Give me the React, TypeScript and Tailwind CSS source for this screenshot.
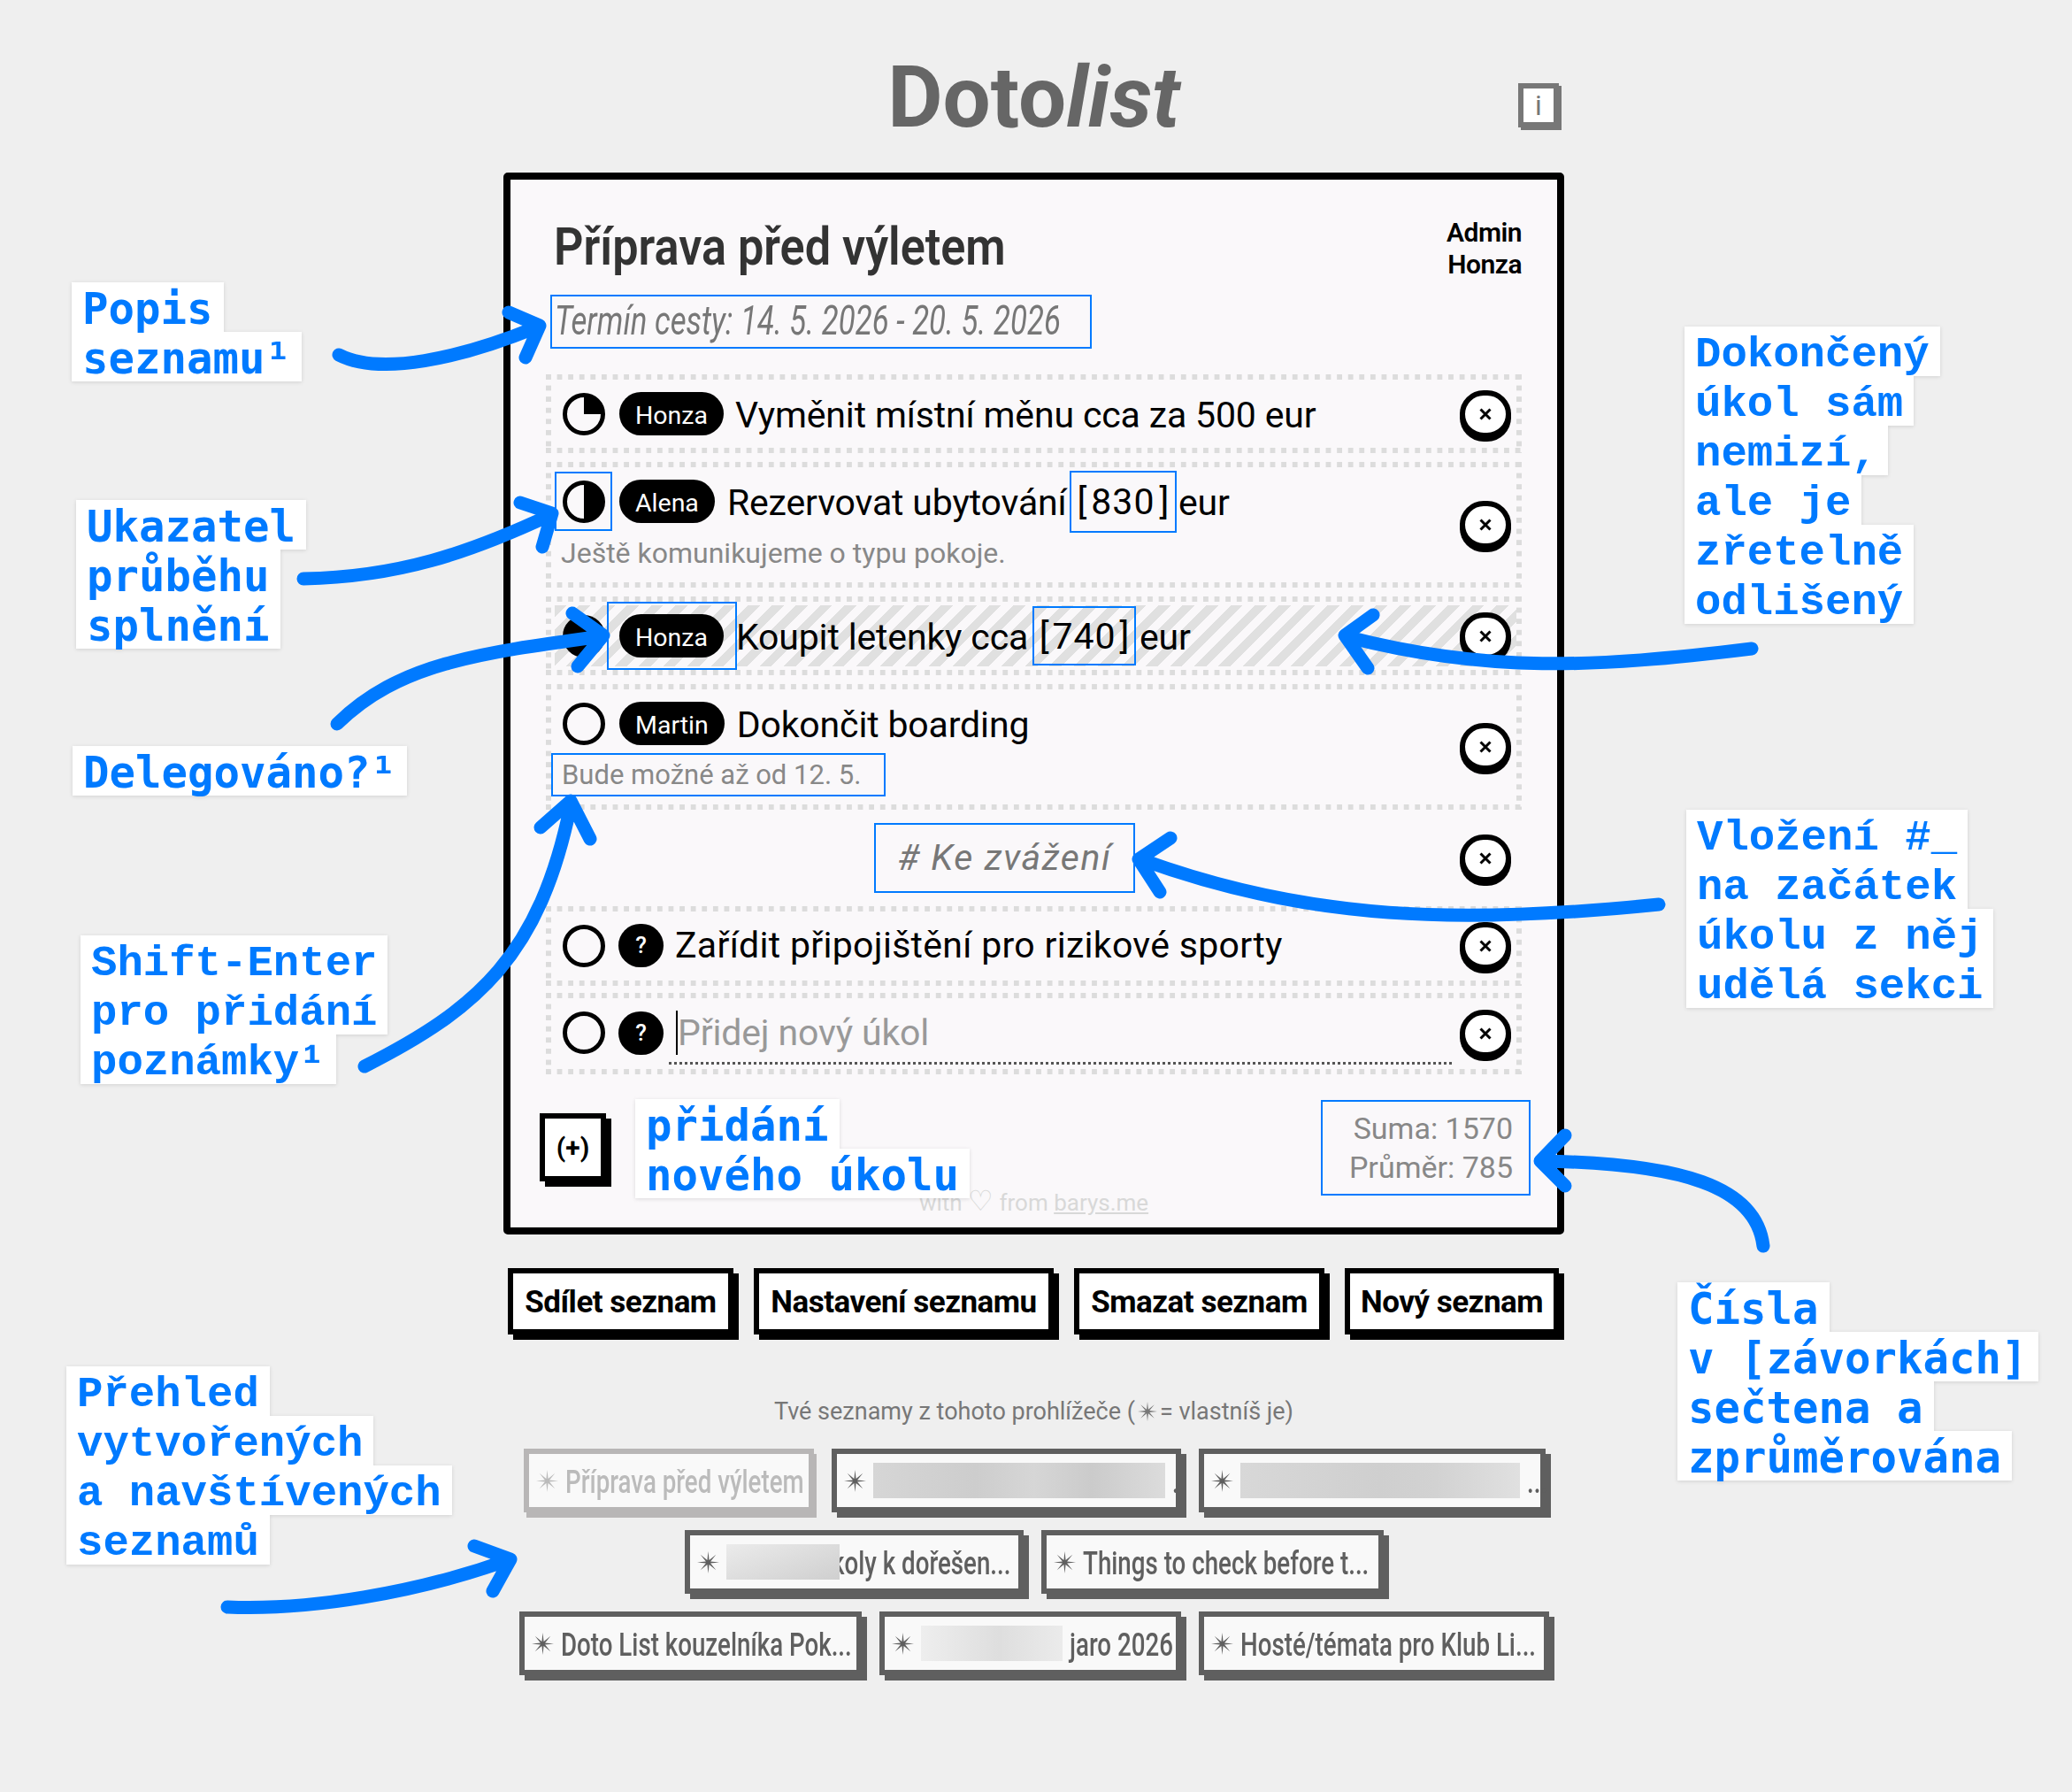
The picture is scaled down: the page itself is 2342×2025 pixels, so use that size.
const SANS = "[font-family:Roboto,sans-serif]";

// square dots, the browser's own dotted border gives round ones
const DOTTED =
  "[background-image:linear-gradient(90deg,#dcdcdc_50%,transparent_50%),linear-gradient(90deg,#dcdcdc_50%,transparent_50%),linear-gradient(#dcdcdc_50%,transparent_50%),linear-gradient(#dcdcdc_50%,transparent_50%)] [background-size:12.6px_6px,12.6px_6px,6px_12.6px,6px_12.6px] [background-position:0_0,0_100%,0_0,100%_0] [background-repeat:repeat-x,repeat-x,repeat-y,repeat-y]";

function Progress({ value }: { value: 0 | 25 | 50 | 100 }) {
  return (
    <svg viewBox="0 0 48 48" className="relative h-12 w-12 shrink-0">
      <circle cx="24" cy="24" r="21.5" fill="none" stroke="#000" strokeWidth="5" />
      {value === 25 && <path d="M24 24V3A21 21 0 0 1 45 24Z" fill="#000" />}
      {value === 50 && <path d="M24 3A21 21 0 0 1 24 45Z" fill="#000" />}
      {value === 100 && <circle cx="24" cy="24" r="21" fill="#000" />}
    </svg>
  );
}

function Pill({ name }: { name: string }) {
  return (
    <span className="flex h-[49px] shrink-0 items-center rounded-full bg-black px-[18px] pt-1 text-[28.5px] tracking-normal text-white">
      {name}
    </span>
  );
}

function Unknown() {
  return (
    <span className="flex h-[49px] w-[51px] shrink-0 items-center justify-center rounded-full bg-black text-[26px] font-medium text-white">
      ?
    </span>
  );
}

function Close() {
  return (
    <button className="relative flex h-[54px] w-[58px] shrink-0 items-center justify-center rounded-full border-[6px] border-black bg-white shadow-[0_4px_0_#000]">
      <svg viewBox="0 0 14 14" className="h-[14px] w-[14px]">
        <path d="M1.5 1.5L12.5 12.5M12.5 1.5L1.5 12.5" stroke="#000" strokeWidth="3" fill="none" />
      </svg>
    </button>
  );
}

function Star({ className }: { className: string }) {
  // eight thin rays
  const pts = Array.from({ length: 16 }, (_, i) => {
    const a = (i * Math.PI) / 8 - Math.PI / 2;
    const r = i % 2 === 0 ? 13 : 2.9;
    return `${(13 + r * Math.cos(a)).toFixed(2)},${(13 + r * Math.sin(a)).toFixed(2)}`;
  }).join(" ");
  return (
    <svg viewBox="0 0 26 26" className={`shrink-0 ${className}`}>
      <polygon points={pts} fill="currentColor" />
    </svg>
  );
}

function Row({ className, children }: { className: string; children: React.ReactNode }) {
  return (
    <div className={`relative flex items-center pl-[19px] pr-3 ${DOTTED} ${className}`}>
      <div className="relative min-w-0 flex-1 self-start pt-5">{children}</div>
      <Close />
    </div>
  );
}

function Note({ className, font, lines }: { className: string; font: string; lines: string[] }) {
  return (
    <div className={`absolute font-bold text-[49px] leading-[56px] text-[#007aff] drop-shadow-[0_1px_2px_rgba(0,0,0,0.12)] ${font} ${className}`}>
      {lines.map((l) => (
        <div key={l} className="h-14 w-fit whitespace-pre bg-white px-3">
          {l}
        </div>
      ))}
    </div>
  );
}

const PLEX = "[font-family:'DejaVu_Sans_Mono',monospace] [&>div]:pt-[3px]";
const LIBMONO = "[font-family:'Liberation_Mono',monospace] [&>div]:pt-1";

const ARROWS = [
  "M383 401C430 425 520 405 606 370M575 353L610 368L594 404",
  "M343 654C450 652 530 625 622 582M588 568L624 580L613 618",
  "M381 818C450 750 540 738 680 719M647 693L682 718L653 753",
  "M1980 733C1800 755 1680 760 1524 720M1552 695L1520 718L1546 755",
  "M1875 1022C1650 1045 1480 1040 1292 972M1323 947L1287 971L1311 1008",
  "M412 1205C540 1140 610 1080 645 910M611 935L645 905L667 948",
  "M257 1816C350 1820 470 1800 574 1763M536 1747L577 1762L557 1798",
  "M1993 1408C1985 1340 1900 1315 1745 1312M1769 1283L1741 1312L1769 1340",
];

type Chip = { w: string; light?: boolean; blur?: string; text: string; under?: boolean };

const CHIPS: Chip[] = [
  { w: "w-[328px]", light: true, text: "Příprava před výletem" },
  { w: "w-[395px]", blur: "w-[330px] bg-[linear-gradient(90deg,#d6d6d6,#cdcdcd_35%,#d6d6d6_55%,#cbcbcb_75%,#dcdcdc)]", text: "." },
  { w: "w-[392px]", blur: "w-[316px] bg-[linear-gradient(90deg,#d8d8d8,#cfcfcf_50%,#d2d2d2_70%,#e0e0e0)]", text: "..." },
  { w: "w-[383px]", blur: "w-[128px] bg-[linear-gradient(160deg,#ebebeb,#cfcfcf)]", text: "koly k dořešen...", under: true },
  { w: "w-[387px]", text: "Things to check before t..." },
  { w: "w-[387px]", text: "Doto List kouzelníka Pok..." },
  { w: "w-[341px]", blur: "w-[160px] bg-[linear-gradient(90deg,#eeeeee,#dedede_55%,#ebebeb)]", text: "jaro 2026" },
  { w: "w-[396px]", text: "Hosté/témata pro Klub Li..." },
];

const BUTTONS = [
  { w: "w-[255px]", label: "Sdílet seznam" },
  { w: "w-[339px]", label: "Nastavení seznamu" },
  { w: "w-[283px]", label: "Smazat seznam" },
  { w: "w-[242px]", label: "Nový seznam" },
];

export default function App() {
  return (
    <div className={`relative h-[2025px] w-[2342px] overflow-hidden bg-[#efefef] ${SANS}`}>
      <div className="ml-[569px] w-[1199px]">
        {/* Header */}
        <header className="grid h-[195px] grid-cols-[1fr_auto_1fr] pt-[62px]">
          <div />
          <h1 className="text-[96px] font-bold leading-[96px] text-[#666]">
            Doto<em>list</em>
          </h1>
          <div className="justify-self-end">
            <div className="mr-[6px] mt-8 flex h-[50px] w-[46px] items-center justify-center border-[6px] border-[#777] bg-white text-[32px] text-[#777] shadow-[3px_3px_0_#777]">
              i
            </div>
          </div>
        </header>

        {/* List card */}
        <main className="relative h-[1200px] rounded-[5px] border-8 border-black bg-[#faf8fa] px-10 pt-10">
          <div className="flex h-[72px] items-start justify-between">
            <h2 className="ml-[9px] inline-block origin-left scale-x-[.87] whitespace-nowrap text-[60px] font-semibold leading-[72px] text-[#333]">
              Příprava před výletem
            </h2>
            <div className="mt-[2px] text-right text-[30px] font-semibold leading-9 tracking-[-0.5px] text-black">
              <div>Admin</div>
              <div>Honza</div>
            </div>
          </div>

          <div className="ml-[5px] mt-[18px] h-[61px] w-[612px] overflow-hidden border-2 border-[#007aff] pl-[3px]">
            <p className="inline-block origin-left scale-x-[.757] whitespace-nowrap text-[46px] italic leading-[54px] text-[#777]">
              Termín cesty: 14. 5. 2026 - 20. 5. 2026
            </p>
          </div>

          <div className="text-[41px] leading-[49px] tracking-[-0.15px] text-black">
            <Row className="mt-[29px] h-[89px]">
              <div className="flex items-center">
                <Progress value={25} />
                <span className="ml-4"><Pill name="Honza" /></span>
                <span className="-mb-[2px] ml-[13px] whitespace-nowrap pt-[2px]">Vyměnit místní měnu cca za 500 eur</span>
              </div>
            </Row>

            <Row className="mt-[10px] h-[142px]">
              <div className="flex items-center">
                <div className="relative">
                  <Progress value={50} />
                  <span className="absolute -left-[9px] -top-[10px] h-[67px] w-[65px] border-2 border-[#007aff]" />
                </div>
                <span className="ml-4"><Pill name="Alena" /></span>
                <span className="-mb-[2px] ml-[14px] w-[387px] whitespace-nowrap pt-[2px]">Rezervovat ubytování</span>
                <span className="-my-3 flex h-[70px] w-[121px] items-center justify-center border-2 border-[#007aff] pt-[2px]">
                  [<span className="mx-[5px] tracking-[1px]">830</span>]
                </span>
                <span className="-mb-[2px] ml-[2px] pt-[2px]">eur</span>
              </div>
              <p className="-ml-[2px] mt-3 text-[32px] leading-[44px] tracking-normal text-[#888]">Ještě komunikujeme o typu pokoje.</p>
            </Row>

            <Row className="mt-[10px] h-[89px]">
              <div className="absolute -left-[9px] -right-[64px] top-[10px] h-[69px] bg-[repeating-linear-gradient(135deg,#e0e0e0_0_9.65px,transparent_9.65px_19.3px)]" />
              <div className="relative flex items-center">
                <Progress value={100} />
                <div className="relative ml-4">
                  <Pill name="Honza" />
                  <span className="absolute -left-[14px] -top-[14px] h-[77px] w-[147px] border-2 border-[#007aff]" />
                </div>
                <span className="-mb-[2px] ml-[14px] w-[335px] whitespace-nowrap pt-[2px]">Koupit letenky cca</span>
                <span className="-my-3 flex h-[67px] w-[117px] items-center justify-center border-2 border-[#007aff] pt-[2px]">
                  [<span className="mx-[4px] tracking-[1px]">740</span>]
                </span>
                <span className="-mb-[2px] ml-1 pt-[2px]">eur</span>
              </div>
            </Row>

            <Row className="mt-[10px] h-[142px]">
              <div className="flex items-center">
                <Progress value={0} />
                <span className="ml-4"><Pill name="Martin" /></span>
                <span className="-mb-[2px] ml-[14px] whitespace-nowrap pt-[2px]">Dokončit boarding</span>
              </div>
              <p className="-ml-[13px] mt-[9px] h-[49px] w-[378px] border-2 border-[#007aff] pl-[10px] text-[31px] leading-[45px] tracking-normal text-[#888]">
                Bude možné až od 12. 5.
              </p>
            </Row>

            <div className="flex h-[109px] items-center justify-between pr-3">
              <div className="ml-[371px] flex h-[79px] w-[295px] items-center justify-center border-2 border-[#007aff] italic tracking-[1.6px] text-[#777]">
                # Ke zvážení
              </div>
              <Close />
            </div>

            <Row className="h-[90px]">
              <div className="flex items-center">
                <Progress value={0} />
                <span className="ml-[15px]"><Unknown /></span>
                <span className="ml-[13px] whitespace-nowrap tracking-[0.3px]">Zařídit připojištění pro rizikové sporty</span>
              </div>
            </Row>

            <Row className="mt-2 h-[92px]">
              <div className="flex items-center">
                <Progress value={0} />
                <span className="ml-[15px]"><Unknown /></span>
                <span className="ml-[14px] h-[50px] whitespace-nowrap border-l-2 border-black leading-[50px] text-[#999]">Přidej nový úkol</span>
              </div>
              <div className="absolute left-[120px] right-[9px] top-[78px] border-t-[3px] border-dotted border-[#555]" />
            </Row>
          </div>

          {/* Footer */}
          <div className="mt-[29px] flex items-start justify-between">
            <div className="-ml-[7px] mt-[15px] flex h-[77px] w-[75px] items-center justify-center border-[6px] border-black bg-white text-[30px] font-bold shadow-[6px_6px_0_#000]">
              (+)
            </div>
            <div className="-mr-[10px] h-[108px] w-[237px] border-2 border-[#007aff] pr-[18px] pt-[8px] text-right text-[34px] leading-[44px] text-[#888]">
              <div>Suma: 1570</div>
              <div>Průměr: 785</div>
            </div>
          </div>

          <div className="absolute inset-x-0 bottom-[10px] text-center text-[26px] leading-9 text-[#d8d8d8]">
            with <span className="text-[32px] leading-none">♡</span> from <span className="underline">barys.me</span>
          </div>
        </main>

        {/* List actions */}
        <div className="ml-[5px] mt-[38px] flex gap-[23px]">
          {BUTTONS.map((b) => (
            <button key={b.label} className={`flex h-[75px] items-center justify-center border-[6px] border-black bg-white pt-1 text-[35px] font-bold tracking-[-0.5px] shadow-[6px_6px_0_#000] ${b.w}`}>
              {b.label}
            </button>
          ))}
        </div>

        <p className="mt-[69px] flex items-center justify-center text-[27px] leading-9 text-[#777]">
          Tvé seznamy z tohoto prohlížeče (<Star className="mx-[3px] h-[22px] w-[22px]" /> = vlastníš je)
        </p>

        {/* Saved lists */}
        <div className="ml-[5px] mt-6 flex w-[1190px] flex-wrap justify-center gap-5">
          {CHIPS.map((c) => (
            <div
              key={c.text}
              className={`flex h-[72px] items-center gap-2 border-[6px] bg-[#f9f9f9] pl-2 text-[36px] font-medium ${c.w} ${
                c.light
                  ? "border-[#b8b6b6] text-[#bbb] shadow-[3px_6px_0_#b8b6b6]"
                  : "border-[#5f5f5f] text-[#5f5f5f] shadow-[6px_6px_0_#5f5f5f]"
              }`}
            >
              <Star className="h-[25px] w-[25px]" />
              {c.blur && <span className={`relative z-10 h-10 shrink-0 ${c.blur}`} />}
              <span className={`inline-block origin-left scale-x-[.77] whitespace-nowrap pt-1 ${c.under ? "-ml-[17px]" : ""}`}>{c.text}</span>
            </div>
          ))}
        </div>
      </div>

      {/* Annotation layer */}
      <svg viewBox="0 0 2342 2025" className="pointer-events-none absolute left-0 top-0 h-[2025px] w-[2342px]">
        {ARROWS.map((d) => (
          <path key={d} d={d} fill="none" stroke="#007aff" strokeWidth="15" strokeLinecap="round" strokeLinejoin="round" />
        ))}
      </svg>

      <Note className="left-[81px] top-[319px]" font={PLEX} lines={["Popis", "seznamu¹"]} />
      <Note className="left-[86px] top-[565px]" font={PLEX} lines={["Ukazatel", "průběhu", "splnění"]} />
      <Note className="left-[82px] top-[843px]" font={PLEX} lines={["Delegováno?¹"]} />
      <Note className="left-[91px] top-[1057px]" font={LIBMONO} lines={["Shift-Enter", "pro přidání", "poznámky¹"]} />
      <Note className="left-[75px] top-[1544px]" font={LIBMONO} lines={["Přehled", "vytvořených", "a navštívených", "seznamů"]} />
      <Note className="left-[718px] top-[1242px]" font={PLEX} lines={["přidání", "nového úkolu"]} />
      <Note className="left-[1904px] top-[369px]" font={LIBMONO} lines={["Dokončený", "úkol sám", "nemizí,", "ale je", "zřetelně", "odlišený"]} />
      <Note className="left-[1906px] top-[915px]" font={LIBMONO} lines={["Vložení #_", "na začátek", "úkolu z něj", "udělá sekci"]} />
      <Note className="left-[1896px] top-[1449px]" font={PLEX} lines={["Čísla", "v [závorkách]", "sečtena a", "zprůměrována"]} />
    </div>
  );
}
